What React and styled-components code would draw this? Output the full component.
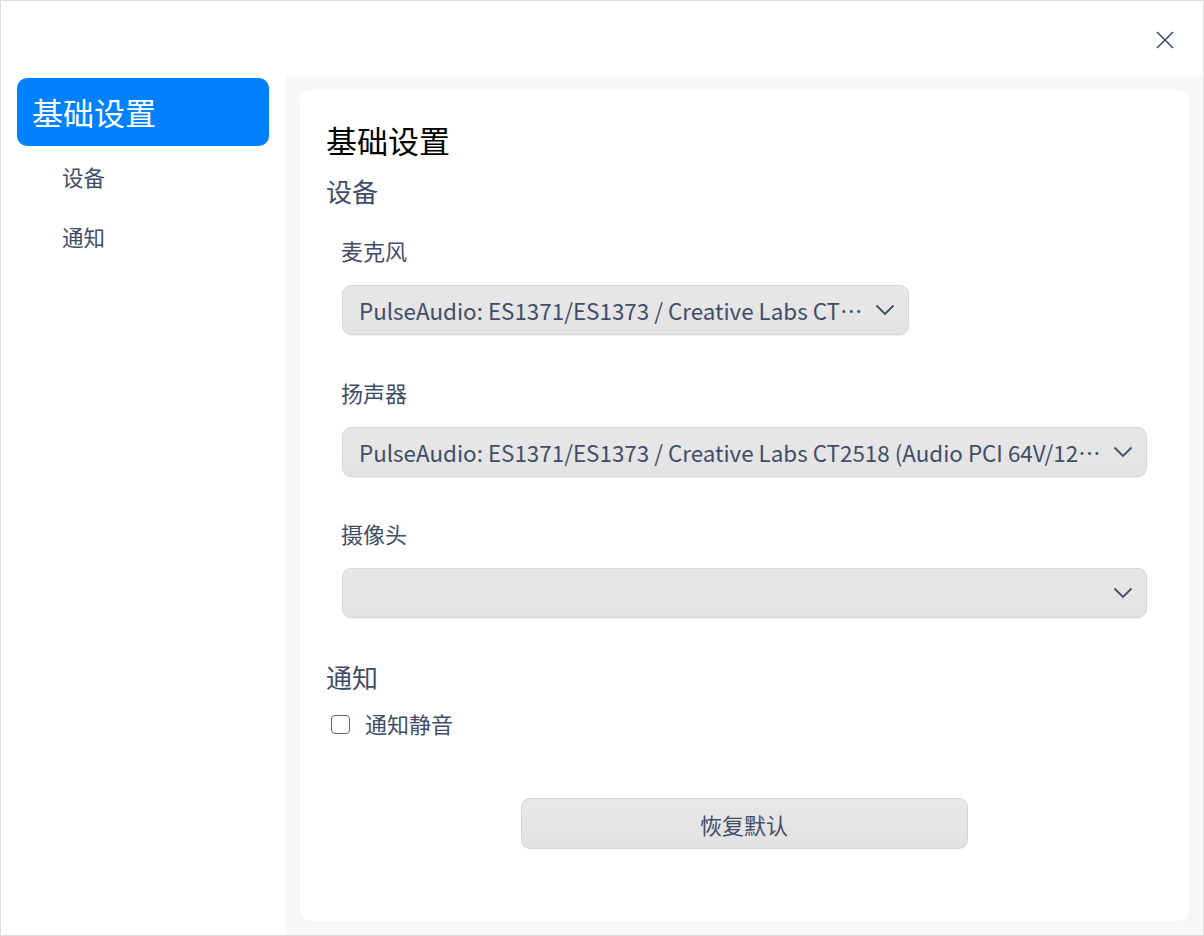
import React from "react";
import styled, { createGlobalStyle } from "styled-components";

const Global = createGlobalStyle`
  html, body { margin: 0; padding: 0; background: #ffffff; }
  body { font-family: "Noto Sans CJK SC", "Noto Sans", sans-serif; }
  * { box-sizing: border-box; }
`;

const Window = styled.div`
  width: 1204px;
  height: 936px;
  border: 1px solid #dcdcdc;
  background: #ffffff;
  display: flex;
  flex-direction: column;
  color: #414d68;
`;

const TitleBar = styled.div`
  height: 75px;
  display: flex;
  justify-content: flex-end;
  align-items: center;
  padding-right: 22px;
  flex-shrink: 0;
`;

const CloseButton = styled.button`
  width: 32px;
  height: 32px;
  border: none;
  background: transparent;
  padding: 0;
  display: flex;
  align-items: center;
  justify-content: center;
  cursor: pointer;
  margin-top: 2px;
`;

const Body = styled.div`
  flex: 1;
  display: flex;
  min-height: 0;
`;

const Sidebar = styled.nav`
  width: 285px;
  flex-shrink: 0;
  padding: 2px 17px 0 16px;
  display: flex;
  flex-direction: column;
`;

const NavHead = styled.div`
  height: 68px;
  border-radius: 10px;
  background: #0081ff;
  color: #ffffff;
  font-size: 31px;
  display: flex;
  align-items: center;
  padding-left: 15px;
  padding-bottom: 2px;
`;

const NavItem = styled.div`
  height: 60px;
  display: flex;
  align-items: center;
  padding-left: 45px;
  font-size: 21.5px;
  color: #414d68;
`;

const Main = styled.main`
  flex: 1;
  background: #f7f7f7;
  padding: 14px;
  display: flex;
`;

const Card = styled.section`
  flex: 1;
  background: #ffffff;
  border-radius: 10px;
  padding: 29px 42px 0 26px;
  display: flex;
  flex-direction: column;
`;

const PageTitle = styled.h1`
  margin: 0;
  font-size: 31px;
  line-height: 42px;
  font-weight: 400;
  color: #000000;
`;

const SectionTitle = styled.h2`
  margin: ${(p) => p.$top}px 0 0 0;
  font-size: 26px;
  line-height: 34px;
  font-weight: 400;
  color: #414d68;
`;

const FieldLabel = styled.div`
  margin: ${(p) => p.$top}px 0 0 15px;
  font-size: 22px;
  line-height: 30px;
  color: #414d68;
`;

const Select = styled.div`
  margin: 20px 0 0 16px;
  width: ${(p) => p.$width}px;
  height: 50px;
  border-radius: 9px;
  border: 1px solid #d6d6d6;
  background: linear-gradient(#e7e7e7, #e3e3e3);
  box-shadow: 0 1px 1px rgba(0, 0, 0, 0.04);
  display: flex;
  align-items: center;
  padding: 0 13px 0 16px;
  gap: 10px;
`;

const SelectText = styled.span`
  flex: 1;
  min-width: 0;
  white-space: nowrap;
  overflow: hidden;
  text-overflow: ellipsis;
  font-size: 22.4px;
  color: #414d68;
`;

const CheckRow = styled.label`
  margin: 14px 0 0 5px;
  height: 30px;
  display: flex;
  align-items: center;
  gap: 15px;
  font-size: 22px;
  color: #414d68;
`;

const CheckBox = styled.span`
  width: 19px;
  height: 19px;
  border: 1.6px solid #5a647c;
  border-radius: 4px;
  background: #ffffff;
  display: inline-block;
  margin-top: 2px;
`;

const ButtonRow = styled.div`
  margin-top: 60px;
  display: flex;
  justify-content: center;
  padding-left: 15px;
`;

const ResetButton = styled.button`
  width: 447px;
  height: 51px;
  border-radius: 9px;
  border: 1px solid #d6d6d6;
  background: linear-gradient(#e8e8e8, #e2e2e2);
  font-family: inherit;
  font-size: 22px;
  color: #414d68;
  cursor: pointer;
`;

const Chevron = () => (
  <svg width="20" height="12" viewBox="0 0 20 12" fill="none">
    <path d="M1.5 1.5 L10 10 L18.5 1.5" stroke="#414d68" strokeWidth="1.8" />
  </svg>
);

const CloseIcon = () => (
  <svg width="18" height="18" viewBox="0 0 18 18" fill="none">
    <path d="M1 1 L17 17 M17 1 L1 17" stroke="#414d68" strokeWidth="1.6" />
  </svg>
);

const DeviceSelect = ({ width, value }) => (
  <Select $width={width}>
    <SelectText>{value}</SelectText>
    <Chevron />
  </Select>
);

const DEVICE = "PulseAudio: ES1371/ES1373 / Creative Labs CT2518 (Audio PCI 64V/128/5200 / Creative CT4810/CT5803/CT5806 [Sound Blaster PCI])";

export default function App() {
  return (
    <>
      <Global />
      <Window>
        <TitleBar>
          <CloseButton aria-label="close">
            <CloseIcon />
          </CloseButton>
        </TitleBar>
        <Body>
          <Sidebar>
            <NavHead>基础设置</NavHead>
            <NavItem>设备</NavItem>
            <NavItem>通知</NavItem>
          </Sidebar>
          <Main>
            <Card>
              <PageTitle>基础设置</PageTitle>
              <SectionTitle $top={13}>设备</SectionTitle>
              <FieldLabel $top={27}>麦克风</FieldLabel>
              <DeviceSelect width={567} value={DEVICE} />
              <FieldLabel $top={42}>扬声器</FieldLabel>
              <DeviceSelect width={805} value={DEVICE} />
              <FieldLabel $top={41}>摄像头</FieldLabel>
              <DeviceSelect width={805} value="" />
              <SectionTitle $top={42}>通知</SectionTitle>
              <CheckRow>
                <CheckBox />
                通知静音
              </CheckRow>
              <ButtonRow>
                <ResetButton>恢复默认</ResetButton>
              </ButtonRow>
            </Card>
          </Main>
        </Body>
      </Window>
    </>
  );
}
